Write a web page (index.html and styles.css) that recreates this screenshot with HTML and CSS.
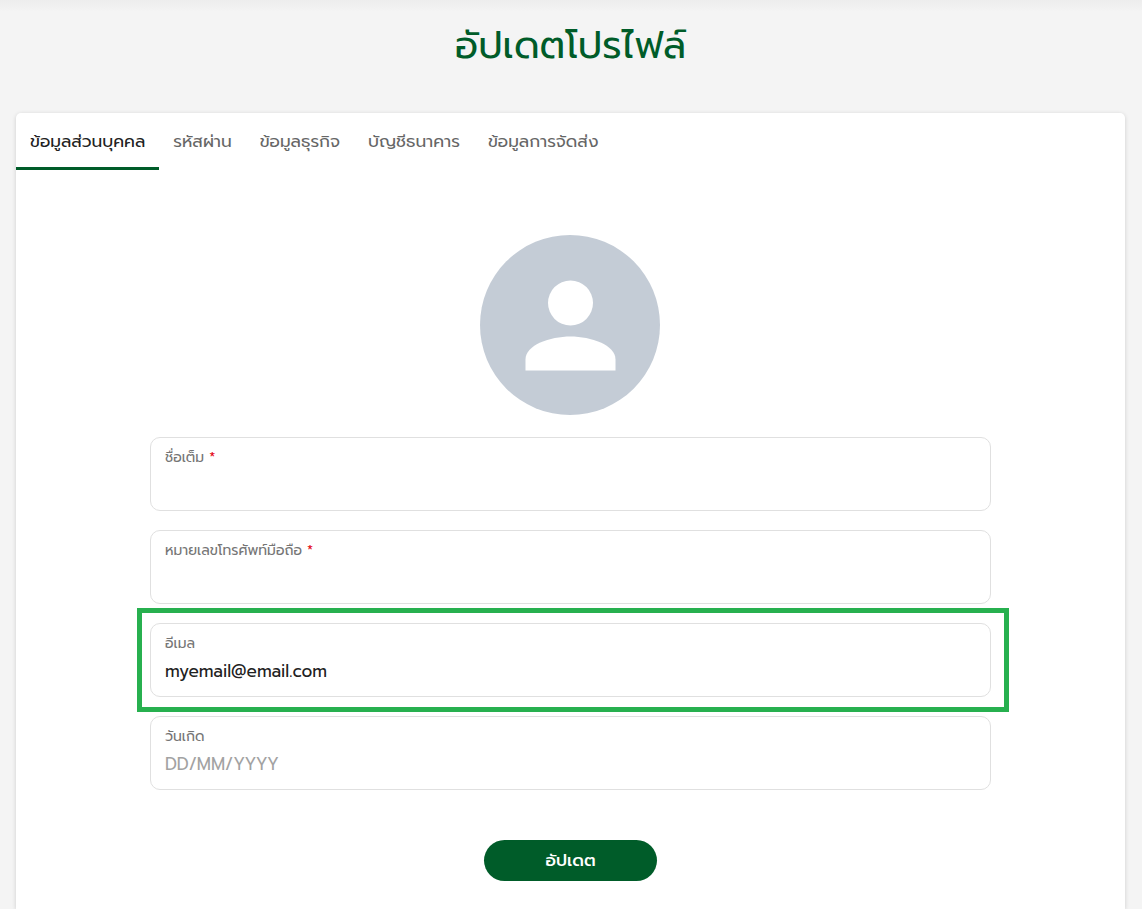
FILE: index.html
```html
<!DOCTYPE html>
<html lang="th">
<head>
  <meta charset="UTF-8">
  <meta name="viewport" content="width=device-width, initial-scale=1.0">
  <title>อัปเดตโปรไฟล์</title>
  <link rel="stylesheet" href="styles.css">
</head>
<body>
  <h1>อัปเดตโปรไฟล์</h1>

  <main class="card">
    <nav class="tabs">
      <a class="tab active" href="#personal">ข้อมูลส่วนบุคคล</a>
      <a class="tab" href="#password">รหัสผ่าน</a>
      <a class="tab" href="#business">ข้อมูลธุรกิจ</a>
      <a class="tab" href="#bank">บัญชีธนาคาร</a>
      <a class="tab" href="#shipping">ข้อมูลการจัดส่ง</a>
    </nav>

    <form class="profile-form" id="personal">
      <svg class="avatar" viewBox="0 0 181 180" aria-hidden="true">
        <circle cx="90" cy="90" r="90" fill="#c4ccd6"/>
        <circle cx="90.5" cy="68" r="22.5" fill="#fff"/>
        <path d="M45.500 135.500V124.500C45.500 110 70 101.500 90.500 101.500S135.500 110 135.500 124.500V135.500Z" fill="#fff"/>
      </svg>

      <div class="field">
        <label for="fullName">ชื่อเต็ม <span class="required">*</span></label>
        <input type="text" id="fullName" name="fullName">
      </div>
      <div class="field">
        <label for="phone">หมายเลขโทรศัพท์มือถือ <span class="required">*</span></label>
        <input type="tel" id="phone" name="phone">
      </div>
      <div class="field highlight">
        <label for="email">อีเมล</label>
        <input type="email" id="email" name="email" value="myemail@email.com">
      </div>
      <div class="field">
        <label for="birthday">วันเกิด</label>
        <input type="text" id="birthday" name="birthday" placeholder="DD/MM/YYYY">
      </div>

      <button class="submit" type="submit">อัปเดต</button>
    </form>
  </main>
</body>
</html>
```

FILE: styles.css
```css
* {
  box-sizing: border-box;
}

body {
  display: flex;
  flex-direction: column;
  min-height: 100vh;
  margin: 0;
  padding: 0 17px 0 16px;
  background: linear-gradient(#ededed, #f4f4f4 12px);
  color: #212121;
  font-family: Prompt, Kanit, "Noto Sans Thai", "Noto Sans", sans-serif;
  font-size: 17px;
}

h1 {
  margin: 0;
  padding: 16px 0 37px;
  color: #005c29;
  font-size: 38px;
  font-weight: 400;
  line-height: 60px;
  text-align: center;
}

.card {
  flex: 1;
  background: #fff;
  border-radius: 5px 5px 0 0;
  box-shadow: 0 1px 4px rgba(0, 0, 0, 0.16);
}

.tabs {
  display: flex;
}

.tab {
  padding: 3px 14px 1px;
  border-bottom: 3px solid transparent;
  color: #666;
  line-height: 50px;
  text-decoration: none;
  white-space: nowrap;
}

.tab.active {
  border-color: #005c29;
  color: #212121;
}

.profile-form {
  display: flex;
  flex-direction: column;
  gap: 19px;
  max-width: 841px;
  margin: 0 auto;
  padding: 65px 0 28px;
}

.avatar {
  align-self: center;
  width: 181px;
  height: 180px;
  margin-bottom: 3px;
}

.field {
  display: flex;
  flex-direction: column;
  height: 74px;
  padding: 9px 14px 7px;
  border: 1px solid #e0e0e0;
  border-radius: 10px;
}

.field label {
  color: #757575;
  font-size: 14px;
  line-height: 22px;
}

.field .required {
  color: #e30613;
}

.field input {
  width: 100%;
  height: 32px;
  padding: 0;
  border: 0;
  outline: 0;
  background: transparent;
  color: #212121;
  font: inherit;
}

.field input::placeholder {
  color: #a2a2a2;
}

/* Frame around the field, drawn over the gap between the rows */
.highlight {
  position: relative;
}

.highlight::after {
  content: "";
  position: absolute;
  inset: -16px -19px -16px -14px;
  border: 5px solid #27b04f;
  pointer-events: none;
}

.submit {
  align-self: center;
  width: 173px;
  height: 41px;
  margin-top: 31px;
  padding: 0 0 2px;
  border: 0;
  border-radius: 21px;
  background: #005c29;
  color: #fff;
  font: inherit;
  font-weight: 500;
  cursor: pointer;
}
```
